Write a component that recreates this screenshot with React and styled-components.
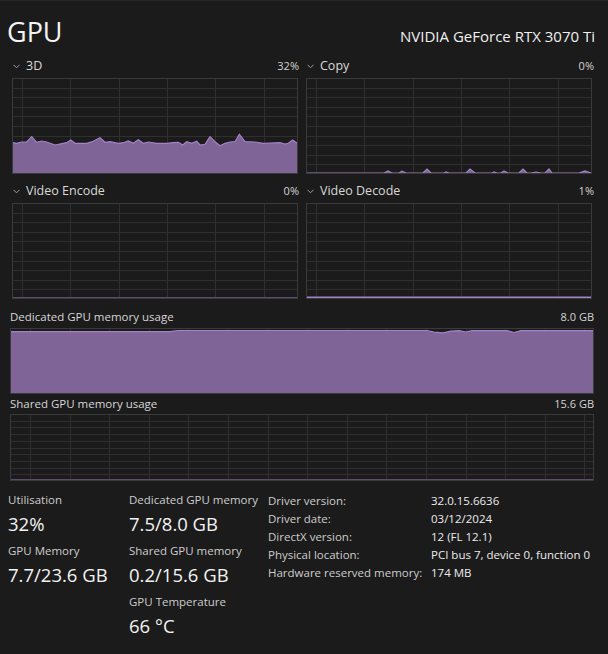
import React from 'react';
import styled, { createGlobalStyle } from 'styled-components';

const GlobalStyle = createGlobalStyle`
  body {
    margin: 0;
    background: #1b1b1b;
    font-family: "Open Sans", "Noto Sans", sans-serif;
    color: #e8e8e8;
  }
`;

const PURPLE_FILL = '#85689f';
const PURPLE_LINE = '#a283c6';

const Page = styled.div`
  width: 608px;
  height: 654px;
  box-sizing: border-box;
  padding: 0 14px 0 8px;
  border-top: 1px solid #262628;
  overflow: hidden;
`;

const Header = styled.div`
  display: flex;
  justify-content: space-between;
  align-items: baseline;
  height: 53px;
  padding-top: 14px;
  box-sizing: border-box;
`;

const Title = styled.h1`
  margin: 0 0 0 -1px;
  font-size: 27px;
  font-weight: 400;
  line-height: 34px;
  color: #f4f4f4;
`;

const DeviceName = styled.div`
  font-size: 15px;
  color: #f0f0f0;
  margin-right: -1px;
`;

const EngineGrid = styled.div`
  display: grid;
  grid-template-columns: 287px 288px;
  column-gap: 7px;
  row-gap: 5px;
  margin-left: 4px;
`;

const Panel = styled.div`
  display: flex;
  flex-direction: column;
`;

const PanelHead = styled.div`
  display: flex;
  align-items: flex-end;
  justify-content: space-between;
  height: ${p => p.$h || 24}px;
  padding-bottom: ${p => p.$pb || 4}px;
  box-sizing: border-box;
  line-height: 16px;
`;

const PanelName = styled.span`
  display: flex;
  align-items: center;
  gap: 6px;
  font-size: 12.5px;
  color: #d8d8d8;
  padding-left: 1px;
`;

const PanelValue = styled.span`
  font-size: 11px;
  color: #d4d4d4;
`;

const SectionName = styled.span`
  font-size: 11.5px;
  color: #d6d6d6;
`;

const MemorySection = styled.div`
  display: flex;
  flex-direction: column;
  margin-left: 2px;
  width: 584px;
`;

const ChartBox = styled.div`
  width: ${p => p.$w}px;
  height: ${p => p.$h}px;
  svg { display: block; }
`;

const Stats = styled.div`
  display: grid;
  grid-template-columns: 121px 139px 1fr;
  align-items: start;
  margin-top: 11px;
`;

const StatColumn = styled.div`
  display: flex;
  flex-direction: column;
`;

const StatLabel = styled.div`
  font-size: 11.5px;
  line-height: 16px;
  color: #cdcdcd;
  white-space: nowrap;
`;

const StatValue = styled.div`
  font-size: 18.5px;
  line-height: 26px;
  margin: 3px 0 6px;
  color: #f2f2f2;
  white-space: nowrap;
`;

const InfoTable = styled.div`
  display: grid;
  grid-template-columns: 163px 1fr;
  align-content: start;
  row-gap: 2px;
  margin-top: 1px;
`;

const InfoCell = styled.div`
  font-size: 11.5px;
  line-height: 16px;
  color: ${p => (p.$value ? '#ececec' : '#cdcdcd')};
  white-space: nowrap;
`;

const Chevron = () => (
  <svg width="7" height="5" viewBox="0 0 7 5">
    <path d="M0.5 0.8 L3.5 3.8 L6.5 0.8" fill="none" stroke="#a0a0a0" strokeWidth="1" />
  </svg>
);

// draws the chart frame, the scrolling grid and the usage series
const UsageChart = ({ w, h, colStep, colOffset, points, line, lineColor }) => {
  const cols = [];
  for (let x = colOffset; x < w - 2; x += colStep) cols.push(Math.round(x) + 0.5);
  const rows = [];
  for (let i = 1; i < 10; i++) rows.push(Math.round((i * h) / 10) + 0.5);

  let area = null;
  if (points) {
    const top = points.map(([x, y]) => `${x},${y}`).join(' L');
    area = (
      <>
        <path d={`M${points[0][0]},${h - 1} L${top} L${w - 1},${h - 1} Z`} fill={PURPLE_FILL} opacity="0.95" />
        <path d={`M${top}`} fill="none" stroke={PURPLE_LINE} strokeWidth="1.2" />
      </>
    );
  }

  return (
    <ChartBox $w={w} $h={h}>
      <svg width={w} height={h} viewBox={`0 0 ${w} ${h}`}>
        {cols.map(x => (
          <line key={'c' + x} x1={x} y1={0} x2={x} y2={h} stroke="#2f2f2f" />
        ))}
        {rows.map(y => (
          <line key={'r' + y} x1={0} y1={y} x2={w} y2={y} stroke="#2f2f2f" />
        ))}
        {area}
        {line && <line x1={1} y1={h - 1.5} x2={w - 1} y2={h - 1.5} stroke={lineColor} strokeWidth={line} />}
        <rect x="0.5" y="0.5" width={w - 1} height={h - 1} fill="none" stroke="#3a3a3a" />
      </svg>
    </ChartBox>
  );
};

const load3d = [
  [1, 64.7], [4.7, 65.3], [9.7, 64], [14.7, 64], [19.7, 58.7], [24.7, 64.3], [29.7, 63], [34.7, 64],
  [43, 67], [51.3, 65.3], [54.7, 64.7], [58.7, 62], [63, 65.3], [74.7, 65.3], [81.3, 63.3], [88, 59.7],
  [93, 64.3], [98, 63.7], [106.3, 65.3], [111.3, 64.7], [116.3, 63], [121.3, 65.3], [126.3, 61.7],
  [131.3, 65.3], [136.3, 64], [144.7, 65.3], [154.7, 65.3], [161.3, 64.7], [166.3, 64.3], [170.7, 67],
  [174.7, 63.7], [179.7, 65.3], [184.7, 63.3], [188, 67], [193, 66.3], [198, 58.7], [203, 63.7],
  [208, 67.7], [213, 65.3], [218, 64], [223, 63.7], [227.3, 56.3], [233, 63.7], [243, 64], [251.3, 65.3],
  [258, 65], [268, 64.7], [273, 66], [276.3, 65.3], [280.7, 62], [285, 65.3],
];

// little copy-engine blips: [start, peak, end, height]
const copyBlips = [
  [78, 82, 86, 2], [93, 96, 100, 1.8], [117, 121, 125, 4], [138, 140, 143, 1], [160, 164, 169, 4],
  [186, 188, 191, 1], [195, 198, 202, 2], [213, 217, 221, 4], [225, 230, 235, 1], [239, 243, 246, 4],
  [273, 279, 285, 2],
];

const copyPoints = (() => {
  const base = 95;
  const pts = [[1, base]];
  copyBlips.forEach(([a, p, b, hgt]) => {
    pts.push([a, base], [p, base - hgt], [b, base]);
  });
  pts.push([285, base]);
  return pts;
})();

const dedicatedPoints = [
  [1, 3.7], [160, 3.7], [168, 2.5], [417, 2.5], [424, 4.2], [433, 4.8], [441, 3.2], [449, 2.6],
  [456, 4], [462, 2.6], [497, 2.6], [504, 4.5], [511, 2.6], [583, 2.6],
];

const info = [
  ['Driver version:', '32.0.15.6636'],
  ['Driver date:', '03/12/2024'],
  ['DirectX version:', '12 (FL 12.1)'],
  ['Physical location:', 'PCI bus 7, device 0, function 0'],
  ['Hardware reserved memory:', '174 MB'],
];

export default function App() {
  return (
    <>
      <GlobalStyle />
      <Page>
        <Header>
          <Title>GPU</Title>
          <DeviceName>NVIDIA GeForce RTX 3070 Ti</DeviceName>
        </Header>

        <EngineGrid>
          <Panel>
            <PanelHead>
              <PanelName><Chevron />3D</PanelName>
              <PanelValue>32%</PanelValue>
            </PanelHead>
            <UsageChart w={286} h={96} colStep={48.3} colOffset={10} points={load3d} />
          </Panel>
          <Panel>
            <PanelHead>
              <PanelName><Chevron />Copy</PanelName>
              <PanelValue>0%</PanelValue>
            </PanelHead>
            <UsageChart w={286} h={96} colStep={48.3} colOffset={10} points={copyPoints} />
          </Panel>
          <Panel>
            <PanelHead>
              <PanelName><Chevron />Video Encode</PanelName>
              <PanelValue>0%</PanelValue>
            </PanelHead>
            <UsageChart w={286} h={96} colStep={48.3} colOffset={10} line={1} lineColor="#5b4b70" />
          </Panel>
          <Panel>
            <PanelHead>
              <PanelName><Chevron />Video Decode</PanelName>
              <PanelValue>1%</PanelValue>
            </PanelHead>
            <UsageChart w={286} h={96} colStep={48.3} colOffset={10} line={2} lineColor={PURPLE_LINE} />
          </Panel>
        </EngineGrid>

        <MemorySection>
          <PanelHead $h={29} $pb={3}>
            <SectionName>Dedicated GPU memory usage</SectionName>
            <PanelValue>8.0 GB</PanelValue>
          </PanelHead>
          <UsageChart w={584} h={66} colStep={39.6} colOffset={20} points={dedicatedPoints} />
          <PanelHead $h={20} $pb={2}>
            <SectionName>Shared GPU memory usage</SectionName>
            <PanelValue>15.6 GB</PanelValue>
          </PanelHead>
          <UsageChart w={584} h={67} colStep={39.6} colOffset={20} line={1} lineColor="#5b4b70" />
        </MemorySection>

        <Stats>
          <StatColumn>
            <StatLabel>Utilisation</StatLabel>
            <StatValue>32%</StatValue>
            <StatLabel>GPU Memory</StatLabel>
            <StatValue>7.7/23.6 GB</StatValue>
          </StatColumn>
          <StatColumn>
            <StatLabel>Dedicated GPU memory</StatLabel>
            <StatValue>7.5/8.0 GB</StatValue>
            <StatLabel>Shared GPU memory</StatLabel>
            <StatValue>0.2/15.6 GB</StatValue>
            <StatLabel>GPU Temperature</StatLabel>
            <StatValue>66 °C</StatValue>
          </StatColumn>
          <InfoTable>
            {info.map(([k, v]) => (
              <React.Fragment key={k}>
                <InfoCell>{k}</InfoCell>
                <InfoCell $value>{v}</InfoCell>
              </React.Fragment>
            ))}
          </InfoTable>
        </Stats>
      </Page>
    </>
  );
}
